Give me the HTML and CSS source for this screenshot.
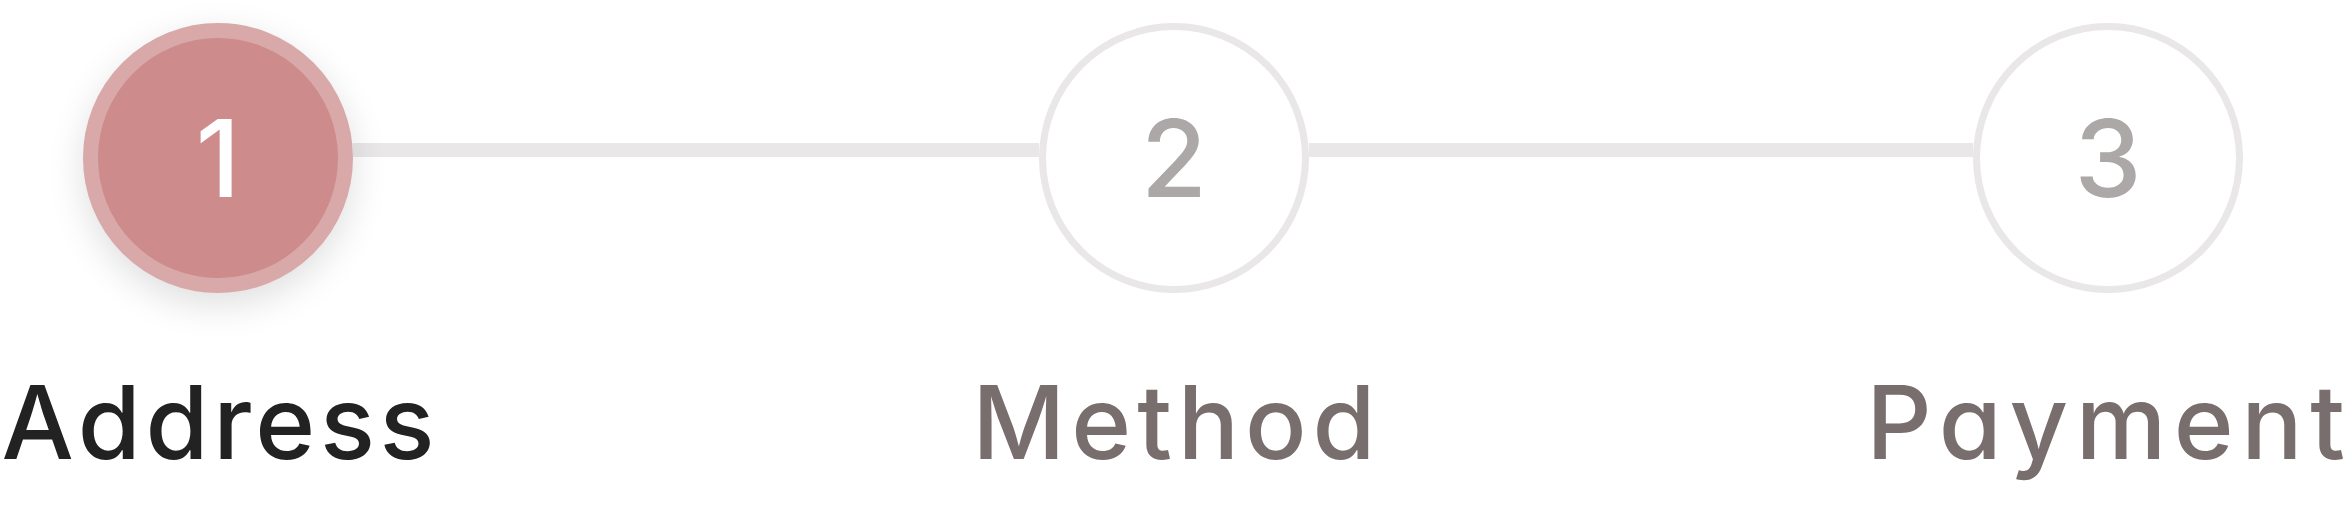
FILE: index.html
```html
<!DOCTYPE html>
<html lang="en">
<head>
<meta charset="utf-8">
<title>Checkout steps</title>
<link rel="stylesheet" href="styles.css">
</head>
<body>
<div class="stepper">
  <div class="step step-active">
    <div class="circle"><span class="num">1</span></div>
    <div class="label label-address">Address</div>
  </div>
  <div class="connector connector-a"></div>
  <div class="step">
    <div class="circle"><span class="num">2</span></div>
    <div class="label label-method">Method</div>
  </div>
  <div class="connector connector-b"></div>
  <div class="step">
    <div class="circle"><span class="num">3</span></div>
    <div class="label label-payment">Payment</div>
  </div>
</div>
</body>
</html>
```
FILE: styles.css
```css
html, body {
  margin: 0;
  padding: 0;
  background: #ffffff;
}
body {
  width: 2349px;
  height: 512px;
  overflow: hidden;
  font-family: Inter, "Open Sans", "Liberation Sans", sans-serif;
  font-feature-settings: "cv11" 1;
}
.stepper {
  display: flex;
  align-items: flex-start;
  padding: 23px 0 0 83px;
}
.step {
  width: 270px;
  flex: none;
  display: flex;
  flex-direction: column;
  align-items: center;
}
.circle {
  box-sizing: border-box;
  width: 270px;
  height: 270px;
  border-radius: 50%;
  border: 7px solid #e9e7e8;
  background: #ffffff;
  display: flex;
  align-items: center;
  justify-content: center;
  position: relative;
  z-index: 1;
}
.num {
  font-size: 107px;
  line-height: 1;
  font-weight: 500;
  color: #ada8a8;
}
.step-active .circle {
  border: 15px solid #d9a9a9;
  background: #ce8b8b;
  box-shadow: 0 12px 36px rgba(0, 0, 0, 0.13);
}
.step-active .num {
  color: #ffffff;
}
.label {
  margin-top: 78px;
  font-size: 102px;
  line-height: 1;
  font-weight: 500;
  white-space: nowrap;
  color: #786e6d;
}
.step-active .label {
  color: #222222;
}
.label-address {
  letter-spacing: 4.7px;
  padding-left: 4.7px;
}
.label-method {
  letter-spacing: 5.9px;
  padding-left: 5.9px;
}
.label-payment {
  letter-spacing: 7.6px;
  padding-left: 3px;
}
.connector {
  flex: none;
  height: 14px;
  margin-top: 120px;
  background: #e9e7e8;
}
.connector-a {
  width: 686px;
}
.connector-b {
  width: 664px;
}
```
